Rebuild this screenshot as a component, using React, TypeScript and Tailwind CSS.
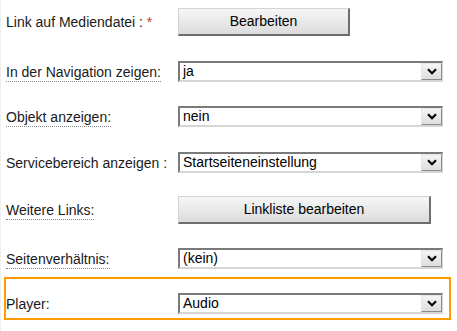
import React from "react";

const font = { fontFamily: '"Liberation Sans", Arial, sans-serif' };

const Label = ({ text, dotted, star }: { text: string; dotted?: boolean; star?: boolean }) => (
  <div className="w-[172px] shrink-0 text-[14px] text-[#1a1a1a] leading-[16px]">
    {dotted ? (
      <span className="border-b border-dotted border-[#8a8a8a] pb-[1px]">{text}</span>
    ) : (
      <span>{text}</span>
    )}
    {star && <span className="text-[#c0392b]"> *</span>}
  </div>
);

const Button = ({ text, w }: { text: string; w: string }) => (
  <button
    className={`${w} h-[28px] text-[14px] text-black bg-gradient-to-b from-[#f6f6f6] to-[#dcdcdc] border-t border-l border-[#d4d4d4] border-r-2 border-b-2 border-r-[#6e6e6e] border-b-[#6e6e6e]`}
  >
    {text}
  </button>
);

const Select = ({ value }: { value: string }) => (
  <div className="w-[265px] h-[21px] flex items-stretch bg-white border-t-2 border-l-2 border-t-[#7a7a7a] border-l-[#7a7a7a] border-r border-b-2 border-r-[#d6d6d6] border-b-[#d6d6d6]">
    <div className="flex-1 pl-[3px] text-[14px] text-black leading-[17px]">{value}</div>
    <div className="w-[21px] flex items-center justify-center bg-gradient-to-b from-[#f4f4f4] to-[#dedede] border-r border-b border-[#8a8a8a] border-t border-t-[#e6e6e6] border-l border-l-[#e6e6e6]">
      <svg width="10" height="7" viewBox="0 0 10 7">
        <path d="M1 1.2 L5 5.2 L9 1.2" fill="none" stroke="#000" strokeWidth="2.2" />
      </svg>
    </div>
  </div>
);

export default function App() {
  return (
    <div className="w-[457px] h-[331px] bg-white border-l border-[#efefef] overflow-hidden" style={font}>
      <div className="pt-[8px]">
        <div className="flex items-center pl-[5px]">
          <Label text="Link auf Mediendatei :" star />
          <Button text="Bearbeiten" w="w-[172px]" />
        </div>
        <div className="flex items-center pl-[5px] mt-[25px]">
          <Label text="In der Navigation zeigen:" dotted />
          <Select value="ja" />
        </div>
        <div className="flex items-center pl-[5px] mt-[24px]">
          <Label text="Objekt anzeigen:" dotted />
          <Select value="nein" />
        </div>
        <div className="flex items-center pl-[5px] mt-[25px]">
          <Label text="Servicebereich anzeigen :" />
          <Select value="Startseiteneinstellung" />
        </div>
        <div className="flex items-center pl-[5px] mt-[23px]">
          <Label text="Weitere Links:" dotted />
          <Button text="Linkliste bearbeiten" w="w-[253px]" />
        </div>
        <div className="flex items-center pl-[5px] mt-[24px]">
          <Label text="Seitenverhältnis:" dotted />
          <Select value="(kein)" />
        </div>
        <div className="ml-[3px] mt-[8px] w-[447px] h-[43px] border-2 border-[#ff9a00] pt-[14px] pb-[4px]">
          <div className="flex items-center">
            <Label text="Player:" />
            <Select value="Audio" />
          </div>
        </div>
      </div>
    </div>
  );
}
